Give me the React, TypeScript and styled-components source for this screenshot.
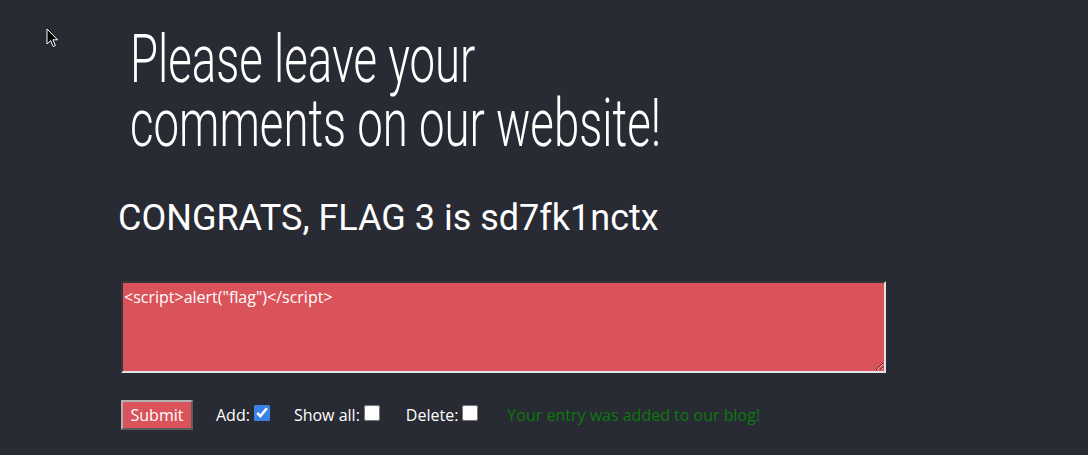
import styled, { createGlobalStyle } from "styled-components";

const GlobalStyle = createGlobalStyle`
  html, body {
    margin: 0;
    padding: 0;
    background: #282b33;
    height: 100%;
    overflow: hidden;
  }
`;

const Page = styled.div`
  position: relative;
  width: 1088px;
  height: 455px;
  background: #282b33;
  color: #fff;
  padding: 27px 0 0 118px;
  box-sizing: border-box;
`;

const Cursor = styled.svg`
  position: absolute;
  left: 46px;
  top: 28px;
`;

const Title = styled.h1`
  margin: 0 0 0 12px;
  font-family: Roboto, sans-serif;
  font-weight: 300;
  font-size: 67px;
  line-height: 64px;
  white-space: nowrap;
  transform: scaleX(0.68);
  transform-origin: left top;
`;

const Flag = styled.h2`
  margin: 41px 0 0 0;
  font-family: Roboto, sans-serif;
  font-weight: 400;
  font-size: 36px;
  line-height: 44px;
  white-space: nowrap;
`;

const Form = styled.form`
  margin-top: 41px;
  margin-left: 3px;
  display: flex;
  flex-direction: column;
  gap: 27px;
`;

const Comment = styled.textarea`
  width: 765px;
  height: 92px;
  box-sizing: border-box;
  background: #db535a;
  color: #fff;
  border: 2px inset #e2e2e2;
  border-top-color: #8a8a8a;
  border-left-color: #8a8a8a;
  font-family: "Open Sans", sans-serif;
  font-size: 16px;
  line-height: 22px;
  padding: 3px 1px;
  resize: both;
  outline: none;
`;

const Controls = styled.div`
  display: flex;
  align-items: center;
  font-family: "Open Sans", sans-serif;
  font-size: 16px;
`;

const SubmitButton = styled.button`
  background: #db535a;
  color: #fff;
  border: 2px outset #b0b0b0;
  font-family: "Open Sans", sans-serif;
  font-size: 16px;
  width: 72px;
  height: 30px;
  padding: 0;
  margin-right: 23px;
`;

const Option = styled.label<{ $gap: number }>`
  display: inline-block;
  color: #fff;
  margin-right: ${(p) => p.$gap}px;
  line-height: 22px;
`;

const Box = styled.input`
  width: 16px;
  height: 16px;
  margin: 0 0 0 4px;
  vertical-align: baseline;
  accent-color: #3b82e6;
`;

const Notice = styled.span`
  color: #0b7a0b;
`;

export default function App() {
  return (
    <>
      <GlobalStyle />
      <Page>
        <Cursor width="14" height="21" viewBox="0 0 14 21">
          <path d="M1 1 L1 16 L4.6 12.6 L7.2 18.5 L9.4 17.5 L6.9 11.8 L11.6 11.8 Z" fill="#000" stroke="#fff" strokeWidth="1" strokeLinejoin="round" />
        </Cursor>
        <Title>
          Please leave your
          <br />
          comments on our website!
        </Title>
        <Flag>CONGRATS, FLAG 3 is sd7fk1nctx</Flag>
        <Form onSubmit={(e) => e.preventDefault()}>
          <Comment defaultValue={'<script>alert("flag")</script>'} />
          <Controls>
            <SubmitButton type="submit">Submit</SubmitButton>
            <Option $gap={24}>
              Add:<Box type="checkbox" defaultChecked />
            </Option>
            <Option $gap={26}>
              Show all:<Box type="checkbox" />
            </Option>
            <Option $gap={29}>
              Delete:<Box type="checkbox" />
            </Option>
            <Notice>Your entry was added to our blog!</Notice>
          </Controls>
        </Form>
      </Page>
    </>
  );
}
